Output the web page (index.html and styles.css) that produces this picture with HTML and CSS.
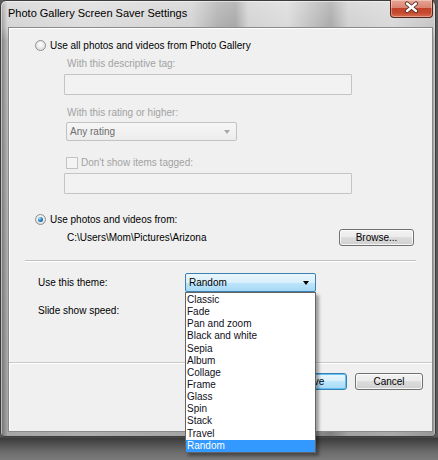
FILE: index.html
```html
<!DOCTYPE html>
<html>
<head>
<meta charset="utf-8">
<link rel="stylesheet" href="styles.css">
</head>
<body>
<div class="window">
  <div class="titlebar">
    <span class="title">Photo Gallery Screen Saver Settings</span>
    <div class="close">
      <svg width="43" height="18" viewBox="0 0 43 18">
        <path d="M17 4.5 L26 12 M26 4.5 L17 12" stroke="#4a2a22" stroke-width="4.2" stroke-linecap="round" fill="none"/>
        <path d="M17 4.5 L26 12 M26 4.5 L17 12" stroke="#ffffff" stroke-width="2.4" stroke-linecap="round" fill="none"/>
      </svg>
    </div>
  </div>
  <div class="client">
    <div class="source">
      <div class="radio-row">
        <span class="radio"></span>
        <span>Use all photos and videos from Photo Gallery</span>
      </div>
      <div class="sub">
        <div class="lbl dis lbl-tag">With this descriptive tag:</div>
        <div class="textbox"></div>
        <div class="lbl dis lbl-rating">With this rating or higher:</div>
        <div class="combo-dis">
          <span>Any rating</span>
          <span class="arrow-dis"></span>
        </div>
        <div class="check-row">
          <span class="check"></span>
          <span class="dis">Don't show items tagged:</span>
        </div>
        <div class="textbox"></div>
      </div>
      <div class="radio-row radio-row2">
        <span class="radio on"></span>
        <span>Use photos and videos from:</span>
      </div>
      <div class="path-row">
        <span>C:\Users\Mom\Pictures\Arizona</span>
        <div class="btn browse">Browse...</div>
      </div>
    </div>
    <div class="sep"></div>
    <div class="settings">
      <div class="set-row theme-row">
        <span class="set-lbl">Use this theme:</span>
        <div class="theme-wrap">
          <div class="combo-focus">
            <span>Random</span>
            <span class="arrow"></span>
          </div>
          <ul class="list">
            <li>Classic</li>
            <li>Fade</li>
            <li>Pan and zoom</li>
            <li>Black and white</li>
            <li>Sepia</li>
            <li>Album</li>
            <li>Collage</li>
            <li>Frame</li>
            <li>Glass</li>
            <li>Spin</li>
            <li>Stack</li>
            <li>Travel</li>
            <li class="sel">Random</li>
          </ul>
        </div>
      </div>
      <div class="set-row speed-row">
        <span class="set-lbl">Slide show speed:</span>
      </div>
    </div>
    <div class="footer">
      <div class="btn default">Save</div>
      <div class="btn">Cancel</div>
    </div>
  </div>
</div>
</body>
</html>
```
FILE: styles.css
```css
html, body {
  margin: 0;
  padding: 0;
}
body {
  width: 438px;
  height: 460px;
  overflow: hidden;
  background: linear-gradient(180deg, #5a5a5a 0, #5a5a5a 437px, #3a3a3a 438px, #505050 444px, #6c6c6c 452px, #7a7a7a 460px);
  font-family: "Liberation Sans", Arial, sans-serif;
  font-size: 10px;
  color: #000;
}
.window {
  box-sizing: border-box;
  width: 436px;
  height: 437px;
  border: 1px solid #3c3c3c;
  border-radius: 6px 6px 4px 4px;
  background-color: #c4c4c4;
  background-image:
    linear-gradient(180deg, rgba(255,255,255,0.30) 0, rgba(255,255,255,0.12) 26px, rgba(0,0,0,0.10) 40px, rgba(0,0,0,0.20) 100%),
    linear-gradient(90deg, #8a8a8a 0, #cfcfcf 1.5%, #d9d9d9 20%, #cdcdcd 44%, #a6a6a6 50%, #9c9c9c 54%, #cdcdcd 57%, #d6d6d6 66%, #b5b5b5 72%, #9f9f9f 76%, #cbcbcb 80%, #d4d4d4 90%, #bdbdbd 100%);
  box-shadow: inset 1px 1px 0 rgba(255,255,255,0.5), inset -1px 0 0 rgba(255,255,255,0.35);
}
.titlebar {
  height: 26px;
  display: flex;
  align-items: flex-start;
}
.title {
  font-size: 11px;
  line-height: 13px;
  padding: 6px 0 0 7px;
  color: #000;
}
.close {
  margin: -1px 2px 0 auto;
  width: 43px;
  height: 18px;
  box-sizing: border-box;
  border: 1px solid #5a2318;
  border-top: none;
  border-radius: 0 0 4px 4px;
  background: linear-gradient(180deg, #e9a493 0, #d98571 45%, #c2432a 50%, #c44a2f 75%, #d66e52 100%);
  box-shadow: inset 0 0 0 1px rgba(255,255,255,0.35);
  overflow: hidden;
}
.close svg {
  display: block;
  margin: -1px 0 0 -1px;
}
.client {
  box-sizing: border-box;
  width: 425px;
  height: 405px;
  margin-left: 7px;
  border: 1px solid #8a8a8a;
  background: #f0f0f0;
  box-shadow: inset 1px 1px 0 #ffffff;
}
.source {
  padding: 11px 18px 0 26px;
}
.radio-row {
  height: 13px;
  display: flex;
  align-items: center;
  gap: 4px;
  line-height: 13px;
}
.radio {
  position: relative;
  box-sizing: border-box;
  width: 11px;
  height: 11px;
  border-radius: 50%;
  border: 1px solid #8f8f8f;
  background: radial-gradient(circle at 50% 40%, #ffffff 0, #e6e6e6 60%, #cfcfcf 100%);
  flex: none;
}
.radio.on::after {
  content: "";
  position: absolute;
  left: 2px;
  top: 2px;
  width: 5px;
  height: 5px;
  border-radius: 50%;
  background: radial-gradient(circle at 35% 30%, #a8e4ff 0, #2a86c0 45%, #0c4a78 100%);
}
.sub {
  padding-left: 29px;
}
.lbl {
  height: 12px;
  line-height: 12px;
  padding-left: 3px;
}
.lbl-tag {
  margin-top: 6px;
}
.lbl-rating {
  margin-top: 12px;
}
.dis {
  color: #a2a2a2;
}
.textbox {
  box-sizing: border-box;
  width: 288px;
  height: 21px;
  margin-top: 4px;
  border: 1px solid #c4c4c4;
  border-radius: 1px;
  background: #f2f2f2;
}
.combo-dis {
  box-sizing: border-box;
  width: 171px;
  height: 19px;
  margin: 3px 0 0 2px;
  border: 1px solid #c2c2c2;
  border-radius: 2px;
  background: linear-gradient(180deg, #f6f6f6, #ededed);
  display: flex;
  align-items: center;
  padding: 0 6px 0 3px;
  color: #6d6d6d;
}
.arrow-dis {
  margin-left: auto;
  width: 0;
  height: 0;
  border-left: 3.5px solid transparent;
  border-right: 3.5px solid transparent;
  border-top: 4px solid #a8a8a8;
}
.check-row {
  margin-top: 15px;
  height: 13px;
  display: flex;
  align-items: center;
  gap: 3px;
  padding-left: 2px;
}
.check {
  box-sizing: border-box;
  width: 12px;
  height: 12px;
  border: 1px solid #c2c2c2;
  background: #f4f4f4;
  flex: none;
}
.radio-row2 {
  margin-top: 19px;
}
.path-row {
  margin-top: 3px;
  height: 17px;
  display: flex;
  align-items: center;
  padding-left: 32px;
}
.btn {
  box-sizing: border-box;
  height: 17px;
  border: 1px solid #707070;
  border-radius: 3px;
  background: linear-gradient(180deg, #f2f2f2 0, #ebebeb 50%, #dddddd 50%, #cfcfcf 100%);
  box-shadow: inset 0 0 0 1px rgba(255,255,255,0.8);
  display: flex;
  align-items: center;
  justify-content: center;
  width: 68px;
}
.browse {
  margin-left: auto;
  width: 75px;
}
.sep {
  margin: 14px 16px 0 16px;
  height: 0;
  border-top: 1px solid #c0c0c0;
  border-bottom: 1px solid #ffffff;
}
.settings {
  box-sizing: border-box;
  height: 100px;
  padding: 11px 0 0 29px;
}
.set-row {
  display: flex;
  align-items: center;
}
.theme-row {
  height: 19px;
}
.set-lbl {
  width: 147px;
  line-height: 12px;
}
.theme-wrap {
  position: relative;
}
.combo-focus {
  box-sizing: border-box;
  width: 131px;
  height: 19px;
  border: 1px solid #3c7fb1;
  border-radius: 2px;
  background: linear-gradient(180deg, #eaf6fd 0, #d9f0fc 50%, #bee6fd 50%, #a7d9f5 100%);
  display: flex;
  align-items: center;
  padding: 0 6px 0 3px;
}
.arrow {
  margin-left: auto;
  width: 0;
  height: 0;
  border-left: 3.5px solid transparent;
  border-right: 3.5px solid transparent;
  border-top: 4px solid #000;
}
.list {
  position: absolute;
  left: 0;
  top: 100%;
  box-sizing: border-box;
  width: 131px;
  margin: 0;
  padding: 1px 0 0 0;
  list-style: none;
  background: #ffffff;
  border: 1px solid #646464;
  box-shadow: 3px 3px 3px rgba(0,0,0,0.35);
  z-index: 5;
}
.list li {
  height: 12.15px;
  line-height: 12.15px;
  padding-left: 1px;
  color: #0f0f1a;
}
.list li.sel {
  background: #3399ff;
  color: #ffffff;
}
.speed-row {
  margin-top: 12px;
  height: 14px;
}
.footer {
  border-top: 1px solid #c8c8c8;
  box-shadow: inset 0 1px 0 #ffffff;
  padding: 10px 9px 0 0;
  display: flex;
  justify-content: flex-end;
  gap: 8px;
}
.btn.default {
  border-color: #3c7fb1;
  background: linear-gradient(180deg, #eaf6fd 0, #d9f0fc 50%, #bee6fd 50%, #a7d9f5 100%);
  box-shadow: inset 0 0 0 1px #61c1f0;
}
```
